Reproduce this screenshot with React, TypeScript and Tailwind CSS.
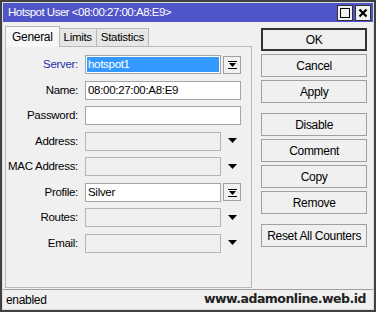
import React from 'react';

const font = { fontFamily: '"Liberation Sans", Arial, sans-serif' };

type Row = {
  label: string;
  value?: string;
  kind: 'select' | 'text' | 'combo';
  active?: boolean;
};

const rows: Row[] = [
  { label: 'Server:', value: 'hotspot1', kind: 'select', active: true },
  { label: 'Name:', value: '08:00:27:00:A8:E9', kind: 'text' },
  { label: 'Password:', value: '', kind: 'text' },
  { label: 'Address:', kind: 'combo' },
  { label: 'MAC Address:', kind: 'combo' },
  { label: 'Profile:', value: 'Silver', kind: 'select' },
  { label: 'Routes:', kind: 'combo' },
  { label: 'Email:', kind: 'combo' },
];

// '' = gap between button groups
const actions = ['OK', 'Cancel', 'Apply', '', 'Disable', 'Comment', 'Copy', 'Remove', '', 'Reset All Counters'];

const DropArrow = () => (
  <svg width="9" height="6" viewBox="0 0 9 6">
    <path d="M0 0h9L4.5 5z" fill="#000" />
  </svg>
);

const SelectButton = () => (
  <div className="flex h-[18px] w-[18px] items-center justify-center border border-[#a0a0a0] bg-[#f0f0f0]">
    <svg width="9" height="9" viewBox="0 0 9 9">
      <path d="M0 1h9v1H0zM1 3h7L4.5 7z" fill="#000" />
      <path d="M0 8h9v1H0z" fill="#000" />
    </svg>
  </div>
);

function Field({ row }: { row: Row }) {
  if (row.kind === 'text') {
    return (
      <div className="flex h-[19px] w-[156px] items-center border border-[#a5a5a5] bg-white px-[2px] text-black">
        {row.value}
      </div>
    );
  }
  if (row.kind === 'select') {
    return (
      <div className="flex items-center gap-[2px]">
        {row.active ? (
          <div className="flex h-[19px] w-[136px] items-center border border-[#a5a5a5] bg-white p-[1px]">
            <span className="flex h-full w-full items-center bg-[#3399ff] px-[1px] text-white">{row.value}</span>
          </div>
        ) : (
          <div className="flex h-[19px] w-[136px] items-center border border-[#a5a5a5] bg-white px-[2px] text-black">
            {row.value}
          </div>
        )}
        <SelectButton />
      </div>
    );
  }
  return (
    <div className="flex items-center">
      <div className="h-[19px] w-[136px] border border-[#b5b5b5] bg-[#f0f0f0]" />
      <div className="flex w-[20px] justify-center pl-[3px]">
        <DropArrow />
      </div>
    </div>
  );
}

export default function App() {
  return (
    <div className="h-[312px] w-[376px] bg-[#404040] p-[2px]" style={font}>
      <div className="flex h-full w-full flex-col border border-[#dcdcdc] bg-[#f0f0f0] text-[11.5px] tracking-[-0.3px]">
        {/* Title bar */}
        <div className="flex h-[22px] items-center justify-between bg-[#4f55c8] pl-[5px] pr-[2px]">
          <span className="text-[11.5px] tracking-[-0.5px] text-white">Hotspot User &lt;08:00:27:00:A8:E9&gt;</span>
          <div className="flex gap-[2px]">
            <div className="flex h-[16px] w-[16px] items-center justify-center border border-[#333] bg-[#f0f0f0]">
              <div className="h-[10px] w-[10px] border-[1.5px] border-black" />
            </div>
            <div className="flex h-[16px] w-[16px] items-center justify-center border border-[#333] bg-[#f0f0f0]">
              <svg width="10" height="10" viewBox="0 0 10 10">
                <path d="M1.5 1.5l7 7M8.5 1.5l-7 7" stroke="#000" strokeWidth="2.2" />
              </svg>
            </div>
          </div>
        </div>

        <div className="flex flex-1 gap-[9px] pl-[2px] pr-[6px] pt-[4px]">
          {/* Tabs and panel */}
          <div className="flex w-[248px] flex-col">
            <div className="flex items-end text-black">
              <div className="relative z-10 -mb-px flex h-[21px] items-center border border-b-0 border-[#b8b8b8] bg-[#f7f7f7] px-[6px] text-[12px]">
                General
              </div>
              <div className="flex h-[18px] items-center border border-b-0 border-l-0 border-[#b8b8b8] bg-[#e6e6e6] px-[4px]">
                Limits
              </div>
              <div className="flex h-[18px] items-center border border-b-0 border-l-0 border-[#b8b8b8] bg-[#e6e6e6] px-[4px]">
                Statistics
              </div>
            </div>
            <div className="flex h-[242px] flex-col gap-[6.5px] border border-[#b8b8b8] pt-[8px]">
              {rows.map((row) => (
                <div key={row.label} className="flex items-center">
                  <span
                    className={
                      row.active
                        ? 'w-[75px] whitespace-nowrap pr-[3px] text-right text-[#1f2fa8]'
                        : 'w-[75px] whitespace-nowrap pr-[3px] text-right text-black'
                    }
                  >
                    {row.label}
                  </span>
                  <div className="pl-[4px]">
                    <Field row={row} />
                  </div>
                </div>
              ))}
            </div>
          </div>

          {/* Action buttons */}
          <div className="flex w-[106px] flex-col gap-[3px] pt-[2px]">
            {actions.map((a, i) =>
              a === '' ? (
                <div key={i} className="h-[4px]" />
              ) : (
                <div
                  key={i}
                  className={
                    a === 'OK'
                      ? 'flex h-[23px] items-center justify-center border-2 border-[#333] bg-[#f0f0f0] text-[12px] text-black'
                      : 'flex h-[23px] items-center justify-center border border-[#a0a0a0] bg-[#f0f0f0] text-[12px] text-black'
                  }
                >
                  {a}
                </div>
              ),
            )}
          </div>
        </div>

        {/* Status bar */}
        <div className="mt-[1px] flex h-[20px] items-center justify-between border-t border-[#a0a0a0] pl-[3px] pr-[7px]">
          <span className="text-[12px] text-black">enabled</span>
          <span
            className="text-[12.5px] font-bold tracking-[-0.5px] text-[#222]"
            style={{ fontFamily: '"DejaVu Sans", Verdana, sans-serif' }}
          >
            www.adamonline.web.id
          </span>
        </div>
      </div>
    </div>
  );
}
